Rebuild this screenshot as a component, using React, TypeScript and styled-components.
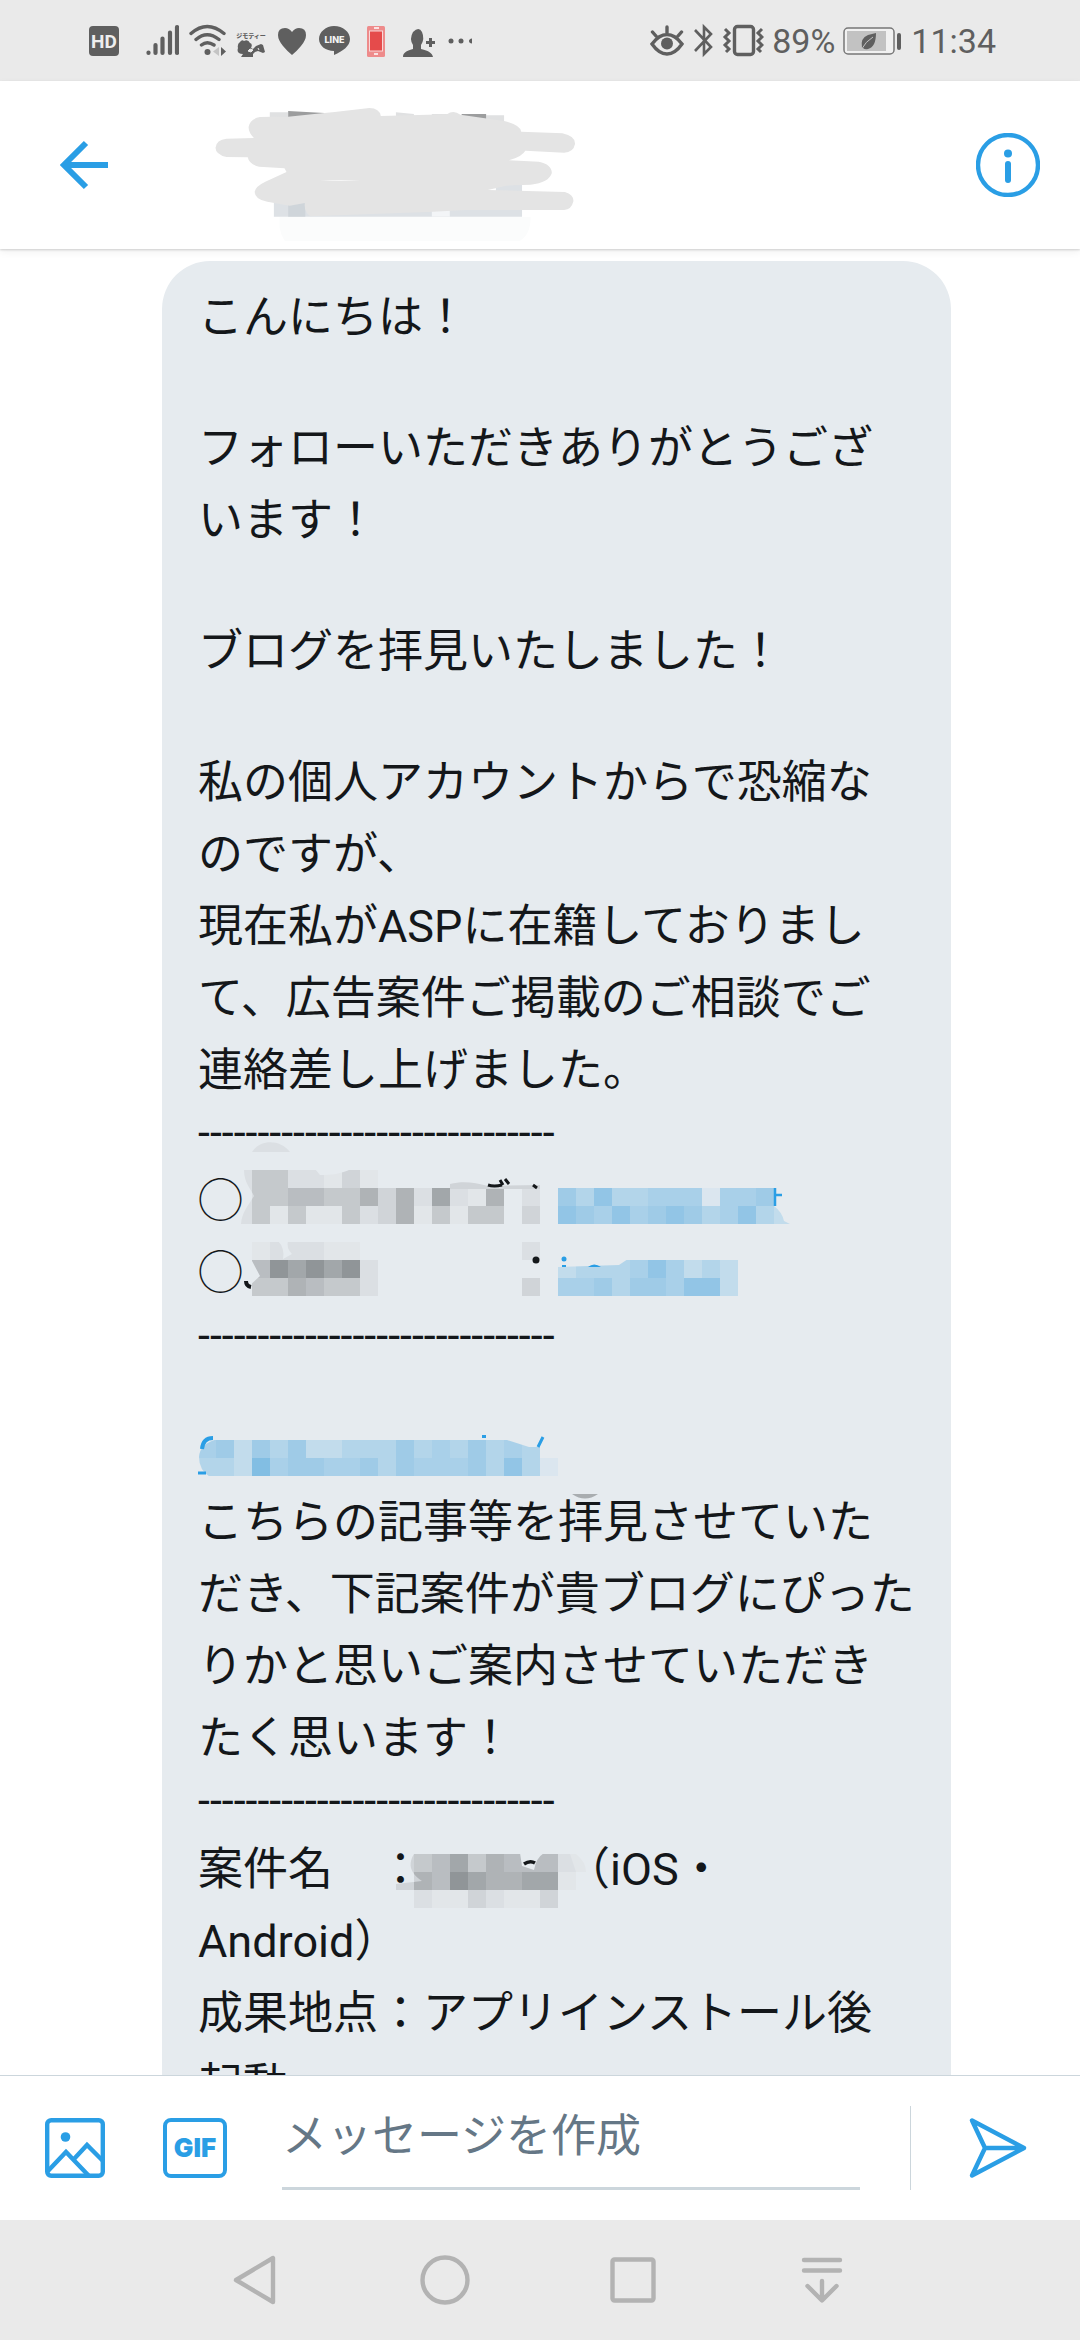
import React from "react";
import styled, { createGlobalStyle } from "styled-components";

const color = {
  system: "#eaeaea",
  status: "#5f5f5f",
  nav: "#b3b3b3",
  accent: "#2a9ee5",
  bubble: "#e6ebef",
  ink: "#14171a",
  hint: "#657786",
  line: "#ccd6dc",
};

const GlobalStyle = createGlobalStyle`
  * { box-sizing: border-box; }
  body {
    margin: 0;
    background: #fff;
    color: ${color.ink};
    font-family: Roboto, "Noto Sans CJK JP", sans-serif;
  }
  svg { display: block; flex: none; }
`;

const Screen = styled.div`
  display: flex;
  flex-direction: column;
  height: 100vh;
  overflow: hidden;
`;

const StatusBar = styled.div`
  display: flex;
  flex: none;
  align-items: center;
  justify-content: space-between;
  height: 81px;
  padding: 0 84px 0 89px;
  background: ${color.system};
  color: ${color.status};
  font-size: 34px;
`;

const StatusGroup = styled.div<{ $gap: number }>`
  display: flex;
  align-items: center;
  gap: ${(p) => p.$gap}px;
`;

const Header = styled.header`
  display: flex;
  flex: none;
  align-items: center;
  height: 168px;
  padding: 0 36px 0 48px;
  background: #fff;
  box-shadow: 0 1px 2px rgba(0, 0, 0, 0.16), 0 3px 8px rgba(0, 0, 0, 0.06);
  z-index: 1;
`;

const Title = styled.h1`
  flex: 1;
  margin: 0 0 0 80px;
  padding-top: 12px;
`;

const IconButton = styled.button`
  display: flex;
  flex: none;
  align-items: center;
  justify-content: center;
  width: 72px;
  height: 72px;
  padding: 0;
  border: 0;
  background: none;
  color: ${color.accent};
`;

const Thread = styled.main`
  flex: 1;
  min-height: 0;
  overflow: hidden;
  padding: 12px 129px 0 162px;
`;

const Bubble = styled.article`
  padding: 18px 32px 24px 36px;
  border-radius: 48px;
  background: ${color.bubble};
  font-size: 45px;
  white-space: pre;
`;

const Line = styled.p`
  position: relative;
  height: 72px;
  margin: 0;
  line-height: 78px;
`;

const ShortLine = styled(Line)`
  height: 59px;
  font-size: 43px;
  line-height: 56px;
`;

const HiddenLink = styled.a`
  display: block;
  height: 100%;
  color: ${color.accent};
`;

const HiddenName = styled.span`
  display: inline-block;
  width: 142px;
`;

const Overlay = styled.svg`
  position: absolute;
  left: 0;
  top: 0;
  overflow: visible;
`;

const Composer = styled.form`
  display: flex;
  flex: none;
  align-items: center;
  height: 145px;
  padding: 0 36px 0 39px;
  border-top: 1px solid ${color.line};
  background: #fff;
`;

const GifButton = styled(IconButton)`
  margin: 0 51px 0 48px;
`;

const GifFrame = styled.span`
  display: flex;
  align-items: center;
  justify-content: center;
  width: 64px;
  height: 60px;
  border: 4px solid ${color.accent};
  border-radius: 8px;
  font: 900 26px/1 Inter, sans-serif;
`;

const MessageInput = styled.input`
  flex: 1;
  min-width: 0;
  height: 84px;
  padding: 0 0 20px;
  border: 0;
  border-bottom: 3px solid ${color.line};
  border-radius: 0;
  outline: 0;
  background: none;
  color: ${color.ink};
  font: 45px/60px Roboto, "Noto Sans CJK JP", sans-serif;
  &::placeholder { color: ${color.hint}; opacity: 1; }
`;

const SendArea = styled.div`
  display: flex;
  align-items: center;
  justify-content: flex-end;
  width: 134px;
  height: 84px;
  margin-left: 50px;
  padding-right: 10px;
  border-left: 1px solid ${color.line};
`;

const NavBar = styled.nav`
  display: grid;
  flex: none;
  grid-template-columns: repeat(4, 1fr);
  justify-items: center;
  align-items: center;
  height: 120px;
  padding: 0 164px 0 162px;
  background: ${color.system};
`;

const NavButton = styled(IconButton)`
  color: ${color.nav};
`;

const tones: Record<string, string> = {
  h: "#e2e6e9",
  a: "#dbdfe3",
  b: "#d0d4d8",
  c: "#c5c9cc",
  d: "#b9bdc1",
  e: "#afb3b6",
  f: "#a2a7aa",
  g: "#909598",
  A: "#dbe6ef",
  B: "#c2dcec",
  C: "#b3d5ea",
  D: "#a9d0e9",
  E: "#9fcbe7",
  F: "#92c5e6",
  G: "#82bee3",
};

const CELL = 18;

type MosaicRow = { x: number; y: number; cells: string };

const Mosaic = ({ rows }: { rows: MosaicRow[] }) => (
  <g shapeRendering="crispEdges">
    {rows.map((row) =>
      row.cells.split("").map((key, i) =>
        tones[key] ? (
          <rect
            key={`${row.x}-${row.y}-${i}`}
            x={row.x + i * CELL}
            y={row.y}
            width={CELL}
            height={CELL}
            fill={tones[key]}
          />
        ) : null
      )
    )}
  </g>
);

const contactRows: MosaicRow[] = [
  { x: 54, y: 6, cells: "ccaahbh" },
  { x: 54, y: 24, cells: "ccddccebeafahe.a" },
  { x: 54, y: 42, cells: "chchhcabehchcc.b" },
  { x: 54, y: 78, cells: "haaahh" },
  { x: 54, y: 96, cells: "dgfgfga" },
  { x: 54, y: 114, cells: "ccedcca" },
  { x: 324, y: 78, cells: "a" },
  { x: 324, y: 114, cells: "b" },
  { x: 360, y: 24, cells: "ECFCCDDDADDE" },
  { x: 360, y: 42, cells: "FEDFDEFECDFC" },
  { x: 360, y: 96, cells: "BCCCDFDBCB" },
  { x: 360, y: 114, cells: "DDECEEDFFB" },
];

const linkRows: MosaicRow[] = [
  { x: 0, y: 14, cells: "DEBECEBBCCCECDCECDC" },
  { x: 0, y: 32, cells: "CCBGDEEDDECEDDDECFCA" },
];

const nameRows: MosaicRow[] = [
  { x: 216, y: 18, cells: "cdfceddda" },
  { x: 216, y: 36, cells: "edgfeeffh" },
  { x: 216, y: 54, cells: "ahhbahhb" },
];

const ContactMosaic = () => (
  <Overlay width="640" height="144" viewBox="0 -1 640 144">
    <path d="M54-12C62-25 82-25 92-12Z" fill={tones.a} />
    <Mosaic rows={contactRows} />
    <path d="M46 6H54V60H43C44 48 50 42 56 32C52 24 46 18 46 6Z" fill={tones.a} />
    <path d="M117 5H153C143 10 133 11 122 11Z" fill={color.bubble} />
    <path d="M252 20C264 17 276 18 290 22L342 21V25H252Z" fill={tones.b} />
    <path d="M290 21Q296 23 304 21M302 16L305 21M307 15L311 20M335 21L339 24" stroke={color.ink} strokeWidth="3" fill="none" />
    <path d="M576 24V42Q584 48 586 57L592 60H576Z" fill={tones.B} />
    <path d="M577 24V42M578 31H584" stroke={color.accent} strokeWidth="2.5" fill="none" />
    <path d="M80 77Q87 84 85 95L94 90Q88 84 90 77Z" fill={color.bubble} />
    <path d="M53 95L62 112L51 122L51 133H54V95Z" fill={color.bubble} />
    <path d="M48 117Q48 122 53 123" stroke={color.ink} strokeWidth="4" fill="none" />
    <circle cx="338" cy="96" r="3.5" fill={color.ink} />
    <path d="M360 95H430L421 101L360 103Z" fill={color.bubble} />
    <circle cx="366" cy="95" r="2.5" fill={color.accent} />
    <path d="M364 101H368V103H364ZM390 103Q396 98 403 103Z" fill={color.accent} />
  </Overlay>
);

const LinkMosaic = () => (
  <Overlay width="420" height="72" viewBox="0 -1 420 72">
    <Mosaic rows={linkRows} />
    <path d="M-1 13H20Q2 17 1 31Q1 44 12 51H-1Z" fill={color.bubble} />
    <path d="M306 13L331 21H343V13Z" fill={color.bubble} />
    <path d="M4 23Q5 12 15 12" stroke={color.accent} strokeWidth="4" fill="none" />
    <path d="M340 21L345 11M284 10.500H288M0 47H8" stroke={color.accent} strokeWidth="3" fill="none" />
    <path d="M374 68H400Q387 77 374 68Z" fill="#a9adb0" />
  </Overlay>
);

const NameMosaic = () => (
  <Overlay width="400" height="72" viewBox="0 -5 400 72">
    <Mosaic rows={nameRows} />
    <path d="M216 18C211 26 210 36 224 45L198 48V54H216Z" fill={tones.b} />
    <path d="M322 17H346Q338 22 336 34L324 30Z" fill={color.bubble} />
    <path d="M326 28Q332 24 337 27" stroke={color.ink} strokeWidth="3.5" fill="none" />
    <path d="M372 18H378Q388 26 388 36H378Z" fill={tones.h} />
  </Overlay>
);

const ScribbledTitle = () => (
  <svg width="400" height="140" viewBox="490 60 980 420" preserveAspectRatio="none">
    <path d="M661 94H706V108H661ZM970 94L1014 99V108H970ZM1058 99H1100V108H1058ZM1191 103H1235V125H1191Z" fill="#e0e1e2" />
    <path d="M706 90L795 96V108H706ZM1131 99H1191V116H1131Z" fill="#9c9d9e" />
    <path d="M671 365H1279V407H671ZM1215 310H1279V332H1215Z" fill="#dde1e5" />
    <path d="M706 365H748V407H706Z" fill="#cfd5da" />
    <path d="M1058 388H1102V407H1058Z" fill="#f3f5f7" />
    <path d="M685 408H1300Q1300 488 1240 490L1160 488Q1120 500 1040 500L745 512Q695 505 685 440Z" fill="#fbfcfc" />
    <path
      d="M637 108Q665 106 700 108Q760 100 820 93L905 81Q930 82 933 105L1095 100Q1111 86 1128 101L1235 120Q1275 132 1277 152L1378 157Q1409 165 1409 188Q1405 214 1382 215L1287 209Q1280 226 1247 238L1320 242Q1352 250 1352 276Q1345 305 1300 311L1240 314L1195 327L1384 333Q1405 340 1405 360Q1400 386 1382 387L1140 387L1050 393L760 406Q744 390 747 366L710 374L655 362Q624 355 624 332Q626 316 650 302L702 273L697 262L635 257Q610 250 607 229L555 228Q528 220 528 200Q530 176 555 173L622 171Q609 155 609 138Q612 114 637 108Z"
      fill="#e4e4e4"
    />
    <path d="M785 300Q830 294 882 299Z" fill="#f8f8f8" />
  </svg>
);

const LeftStatusIcons = () => (
  <StatusGroup $gap={10}>
    <svg width="30" height="36" viewBox="0 0 30 36">
      <rect y="3" width="30" height="30" rx="4" fill={color.status} />
      <text x="15" y="25" textAnchor="middle" fontFamily="Roboto, sans-serif" fontWeight="700" fontSize="19" fill="#eee">HD</text>
    </svg>
    <svg width="50" height="36" viewBox="0 0 50 36" stroke={color.status} strokeWidth="4.200" strokeLinecap="round">
      <path d="M19.500 29.500V30M26.500 22V30M33.500 15.500V30M41 9.500V30M48 4V30" />
    </svg>
    <svg width="38" height="36" viewBox="0 0 38 36" fill="none" stroke={color.status} strokeWidth="3.400" strokeLinecap="round">
      <path d="M2 10.500Q18 -3.500 35 10.500M7 16.500Q18 7 30 16.500M12.500 22Q18 17.500 25 22" />
      <circle cx="18.500" cy="29" r="3" fill={color.status} stroke="none" />
      <path d="M30 24V33L24 28.500Z" fill="#c4c4c4" stroke="none" />
      <path d="M32 24L37 28.500L32 33Z" fill={color.status} stroke="none" />
    </svg>
    <svg width="28" height="36" viewBox="0 0 28 36" fill={color.status} overflow="visible">
      <text x="14" y="15" textAnchor="middle" fontFamily="Noto Sans CJK JP, sans-serif" fontWeight="900" fontSize="6">ジモティー</text>
      <path d="M3 19Q5 16 7 18Q11 16 13 20Q16 21 14 25L16 26L19 23L24 21L26 22L28 29L26 30L21 28L18 29L16 31V34H4L6 31Q-1 31 1 25Q0 21 3 19Z" />
      <path d="M13 26L16 27L14 29L11 28ZM21 25L22 27" stroke={color.system} strokeWidth="1" fill={color.system} />
    </svg>
    <svg width="34" height="36" viewBox="0 0 34 36" fill={color.status}>
      <path d="M17 32Q13 29 8 23Q3 17 3 12Q3 5 10 5Q14 5 17 9Q20 5 24 5Q31 5 31 12Q31 17 26 23Q21 29 17 32Z" />
    </svg>
    <svg width="32" height="36" viewBox="0 0 32 36">
      <path d="M15 3C24 3 31 9 31 16C31 23 24 28 15 32L15 28C7 28 0 23 0 16C0 9 7 3 15 3Z" fill={color.status} />
      <text x="15.500" y="20" textAnchor="middle" fontFamily="Inter, sans-serif" fontWeight="800" fontSize="9" fill="#f4f4f4">LINE</text>
    </svg>
    <svg width="30" height="36" viewBox="0 0 30 36">
      <rect x="6" y="3" width="18" height="31" rx="1.500" fill="#ee8b8b" />
      <rect x="8.500" y="8" width="13" height="20" fill="#e54b4b" stroke="#f8d8d8" />
      <path d="M13 5H18M13 31H17" stroke="#fff" strokeWidth="1.500" />
    </svg>
    <svg width="36" height="36" viewBox="0 0 36 36" fill={color.status}>
      <path d="M2 34C2 30 5 28 12 26V22Q8 16 12 9Q18 3 21 9Q24 16 20 22V26C28 28 31 30 32 34Z" />
      <path d="M28 15H31V18H34V21H31V24H28V21H25V18H28Z" />
    </svg>
    <svg width="26" height="36" viewBox="0 0 26 36" fill={color.status}>
      <circle cx="4" cy="18" r="2.500" />
      <circle cx="14" cy="18" r="2.500" />
      <path d="M25 15.500V20.500Q22 20 22 18Q22 16 25 15.500Z" />
    </svg>
  </StatusGroup>
);

const RightStatusIcons = () => (
  <StatusGroup $gap={8}>
    <svg width="34" height="36" viewBox="0 0 34 36" fill="none" stroke={color.status} strokeWidth="3.400" strokeLinecap="round">
      <path d="M2 21Q9 11.500 17 11.500Q25 11.500 32 21Q25 31 17 31Q9 31 2 21ZM17 4V10M2.500 9L6 13M31.500 9L28 13" />
      <circle cx="17" cy="20.500" r="6" fill={color.status} stroke="none" />
    </svg>
    <svg width="22" height="36" viewBox="0 0 22 36" fill="none" stroke={color.status} strokeWidth="2.600">
      <path d="M3 7L19 24L12 31V4L19 11L3 28" />
    </svg>
    <svg width="42" height="36" viewBox="0 0 42 36" fill="none" stroke={color.status}>
      <rect x="12.500" y="3.500" width="19" height="28" rx="3" strokeWidth="3.400" />
      <path d="M3 6L7 10L3 14L7 18L3 22L7 26L4 29M40 6L36 10L40 14L36 18L40 22L36 26L39 29" strokeWidth="3" />
    </svg>
    <span>89%</span>
    <svg width="60" height="36" viewBox="0 0 60 36">
      <rect x="1" y="5" width="50" height="26" rx="4" fill="#f1f1f1" stroke="#777" strokeWidth="1.500" />
      <rect x="4" y="8" width="39" height="20" fill="#c2c2c2" />
      <path d="M19 25Q17 15 25 12L33 10Q33 24 25 26Q22 27 20 25Z" fill={color.status} />
      <path d="M18 27Q23 18 30 14" stroke="#c2c2c2" fill="none" />
      <rect x="54" y="10" width="4" height="17" rx="2" fill={color.status} />
    </svg>
    <span>11:34</span>
  </StatusGroup>
);

export default function App() {
  return (
    <>
      <GlobalStyle />
      <Screen>
        <StatusBar>
          <LeftStatusIcons />
          <RightStatusIcons />
        </StatusBar>

        <Header>
          <IconButton type="button" aria-label="戻る">
            <svg width="50" height="50" viewBox="0 0 50 50" fill="none" stroke={color.accent} strokeWidth="6">
              <path d="M49 25H6M27 3L5 25L27 47" />
            </svg>
          </IconButton>
          <Title>
            <ScribbledTitle />
          </Title>
          <IconButton type="button" aria-label="情報">
            <svg width="64" height="64" viewBox="0 0 64 64" fill="none" stroke={color.accent}>
              <circle cx="32" cy="32" r="30" strokeWidth="4.400" />
              <path d="M32 31V47" strokeWidth="6" strokeLinecap="round" />
              <circle cx="32" cy="20.500" r="4" fill={color.accent} stroke="none" />
            </svg>
          </IconButton>
        </Header>

        <Thread>
          <Bubble>
            <Line>こんにちは！</Line>
            <ShortLine />
            <Line>フォローいただきありがとうござ</Line>
            <Line>います！</Line>
            <ShortLine />
            <Line>ブログを拝見いたしました！</Line>
            <ShortLine />
            <Line>私の個人アカウントからで恐縮な</Line>
            <Line>のですが、</Line>
            <Line>現在私がASPに在籍しておりまし</Line>
            <Line>て、広告案件ご掲載のご相談でご</Line>
            <Line>連絡差し上げました。</Line>
            <ShortLine>------------------------------</ShortLine>
            <Line>
              ◯<ContactMosaic />
            </Line>
            <Line>◯</Line>
            <ShortLine>------------------------------</ShortLine>
            <ShortLine />
            <ShortLine>
              <HiddenLink href="#article" aria-label="記事">
                <LinkMosaic />
              </HiddenLink>
            </ShortLine>
            <Line>こちらの記事等を拝見させていた</Line>
            <Line>だき、下記案件が貴ブログにぴった</Line>
            <Line>りかと思いご案内させていただき</Line>
            <Line>たく思います！</Line>
            <ShortLine>------------------------------</ShortLine>
            <Line>
              案件名　：<HiddenName />（iOS・
              <NameMosaic />
            </Line>
            <Line>Android）</Line>
            <Line>成果地点：アプリインストール後</Line>
            <Line>起動</Line>
          </Bubble>
        </Thread>

        <Composer onSubmit={(e) => e.preventDefault()}>
          <IconButton type="button" aria-label="画像">
            <svg width="60" height="60" viewBox="0 0 60 60" fill="none" stroke={color.accent} strokeWidth="4.400">
              <rect x="2.200" y="2.200" width="55.600" height="55.600" rx="4" />
              <path d="M2 54L21 34L44 58M29 41L42 27L58 43" />
              <circle cx="20.500" cy="19" r="4.800" fill={color.accent} stroke="none" />
            </svg>
          </IconButton>
          <GifButton type="button">
            <GifFrame>GIF</GifFrame>
          </GifButton>
          <MessageInput type="text" aria-label="メッセージを作成" placeholder="メッセージを作成" />
          <SendArea>
            <IconButton type="submit" aria-label="送信">
              <svg width="60" height="60" viewBox="0 0 60 60" fill="none" stroke={color.accent} strokeWidth="4.400" strokeLinecap="round" strokeLinejoin="round">
                <path d="M4 2.500L56 30L4 57.500L17 30ZM17 30H56" />
              </svg>
            </IconButton>
          </SendArea>
        </Composer>

        <NavBar>
          <NavButton type="button" aria-label="戻る">
            <svg width="50" height="50" viewBox="0 0 50 50" fill="none" stroke="currentColor" strokeWidth="4.400" strokeLinejoin="round">
              <path d="M5 25L42 3V47Z" />
            </svg>
          </NavButton>
          <NavButton type="button" aria-label="ホーム">
            <svg width="50" height="50" viewBox="0 0 50 50" fill="none" stroke="currentColor" strokeWidth="4.400">
              <circle cx="25" cy="25" r="22.500" />
            </svg>
          </NavButton>
          <NavButton type="button" aria-label="履歴">
            <svg width="46" height="46" viewBox="0 0 46 46" fill="none" stroke="currentColor" strokeWidth="4.400">
              <rect x="2.500" y="2.500" width="41" height="41" rx="2" />
            </svg>
          </NavButton>
          <NavButton type="button" aria-label="通知">
            <svg width="42" height="46" viewBox="0 0 42 46" fill="none" stroke="currentColor" strokeWidth="4.400" strokeLinecap="round" strokeLinejoin="round">
              <path d="M3 3H39M3 13.500H39M21 24V43M6.500 29L21 43.500L35.500 29" />
            </svg>
          </NavButton>
        </NavBar>
      </Screen>
    </>
  );
}
